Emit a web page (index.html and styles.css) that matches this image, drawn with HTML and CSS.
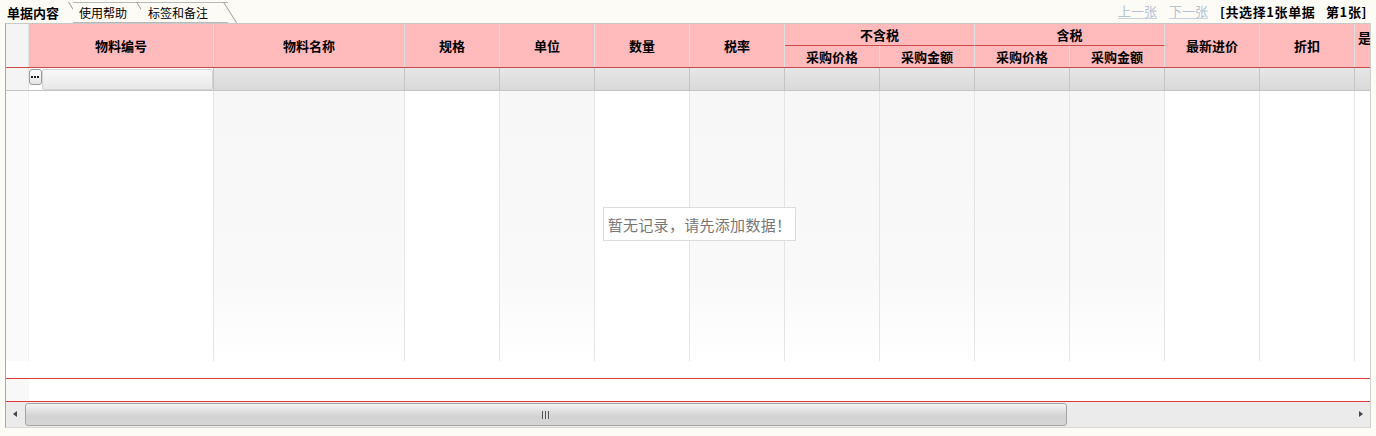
FILE: index.html
```html
<!DOCTYPE html>
<html lang="zh">
<head>
<meta charset="utf-8">
<link rel="stylesheet" href="styles.css">
</head>
<body>
<div class="tabbar">
  <div class="tabs">
    <div class="tab active">单据内容</div>
    <div class="tab">使用帮助</div>
    <div class="tab">标签和备注</div>
  </div>
  <div class="nav">
    <span class="link">上一张</span>
    <span class="link">下一张</span>
    <span class="info">[共选择1张单据&nbsp;&nbsp;&nbsp;第1张]</span>
  </div>
</div>
<div class="grid">
  <div class="head">
    <div class="h rn span2"></div>
    <div class="h span2">物料编号</div>
    <div class="h span2">物料名称</div>
    <div class="h span2">规格</div>
    <div class="h span2">单位</div>
    <div class="h span2">数量</div>
    <div class="h span2">税率</div>
    <div class="h group g1">不含税</div>
    <div class="h group g2">含税</div>
    <div class="h span2 c11">最新进价</div>
    <div class="h span2 c12">折扣</div>
    <div class="h span2 c13 top">是</div>
    <div class="h sub c7">采购价格</div>
    <div class="h sub c8">采购金额</div>
    <div class="h sub c9">采购价格</div>
    <div class="h sub c10">采购金额</div>
  </div>
  <div class="filter">
    <div class="f rn"></div>
    <div class="f first"><span class="dots"><svg width="9" height="3" viewBox="0 0 9 3"><rect x="0" y="0" width="2" height="2" fill="#222"/><rect x="3" y="0" width="2" height="2" fill="#222"/><rect x="6" y="0" width="2" height="2" fill="#222"/></svg></span><span class="inp"></span></div>
    <div class="f"></div><div class="f"></div><div class="f"></div><div class="f"></div>
    <div class="f"></div><div class="f"></div><div class="f"></div><div class="f"></div>
    <div class="f"></div><div class="f"></div><div class="f"></div><div class="f last"></div>
  </div>
  <div class="body">
    <div class="cols">
      <div class="c rn"></div>
      <div class="c"></div><div class="c shade"></div><div class="c"></div><div class="c shade"></div>
      <div class="c"></div><div class="c shade"></div><div class="c shade"></div><div class="c shade"></div>
      <div class="c shade"></div><div class="c shade"></div><div class="c"></div><div class="c"></div>
      <div class="c last"></div>
    </div>
    <div class="empty">暂无记录，请先添加数据！</div>
  </div>
  <div class="foot">
    <div class="frn"></div>
  </div>
  <div class="scroll">
    <div class="arrow left"></div>
    <div class="track">
      <div class="thumb"><span class="grip"></span></div>
    </div>
    <div class="arrow right"></div>
  </div>
</div>
</body>
</html>
```

FILE: styles.css
```css
* { box-sizing: border-box; }
html, body { margin: 0; padding: 0; }
body {
  background: #fcfbf6;
  font-family: "Noto Sans CJK SC", "Liberation Sans", sans-serif;
  font-size: 12px;
  color: #000;
  width: 1376px;
  height: 436px;
  overflow: hidden;
}

.tabbar {
  height: 23px;
  display: flex;
  justify-content: space-between;
  align-items: flex-end;
  padding-left: 5px;
  padding-right: 9px;
}
.tabs { display: flex; height: 21px; align-items: stretch; }
.tab {
  position: relative;
  display: flex;
  align-items: center;
  padding: 0 14px 0 5px;
  font-size: 12px;
  line-height: 1;
  border-top: 1px solid #b8b8b8;
  border-bottom: 1px solid #b8b8b8;
  background: #fcfbf6;
}
.tab::after {
  content: "";
  position: absolute;
  right: 4px;
  top: -1px;
  width: 1px;
  height: 21px;
  background: #9a9a9a;
  transform: skewX(32deg);
  transform-origin: top;
}
.tab.active {
  font-weight: bold;
  font-size: 13px;
  border-top-color: transparent;
  border-bottom-color: transparent;
  padding-left: 2px;
  padding-right: 14px;
}
.tab:nth-child(2) { padding-left: 6px; padding-right: 14px; }
.tab:nth-child(3) { padding-left: 7px; padding-right: 20px; }

.nav {
  display: flex;
  align-items: center;
  height: 23px;
  gap: 12px;
  font-size: 13px;
}
.link {
  color: #b4c2d4;
  border-bottom: 1px solid #c8d2de;
  line-height: 14px;
}
.info { font-weight: bold; letter-spacing: 0.6px; }

.grid {
  margin-left: 5px;
  width: 1366px;
  border-left: 1px solid #a8a8a8;
  border-top: 1px solid #c8c8c8;
  border-right: 1px solid #d0d0d0;
  border-bottom: 1px solid #d8d8d8;
  background: #fff;
  display: flex;
  flex-direction: column;
}

.head, .filter, .cols {
  display: grid;
  grid-template-columns: 23px 185px 191px repeat(10, 95px) 1fr;
}
.head {
  grid-template-rows: 22px 21px;
  height: 44px;
  background: #ffbbbb;
  border-bottom: 1px solid #cc4a4a;
}
.h {
  display: flex;
  align-items: center;
  justify-content: center;
  font-weight: bold;
  font-size: 13px;
  border-right: 1px solid #dedede;
  white-space: nowrap;
  overflow: hidden;
}
.h.rn { background: #f4f4f4; border-right: 1px solid #e2e2e2; grid-column: 1; }
.span2 { grid-row: 1 / span 2; }
.group { grid-row: 1; border-bottom: 1px solid #cc4a4a; }
.g1 { grid-column: 8 / span 2; }
.g2 { grid-column: 10 / span 2; }
.c11 { grid-column: 12; }
.c12 { grid-column: 13; }
.c13 { grid-column: 14; border-right: none; }
.top { align-items: flex-start; padding-top: 4px; justify-content: flex-start; padding-left: 3px; }
.sub { grid-row: 2; }
.c7 { grid-column: 8; }
.c8 { grid-column: 9; }
.c9 { grid-column: 10; }
.c10 { grid-column: 11; }

.filter {
  height: 23px;
  background: linear-gradient(#e6e6e6, #d9d9d9);
  border-bottom: 1px solid #c4c4c4;
}
.f { border-right: 1px solid #c4c4c4; }
.f.rn { background: #f4f4f4; border-right: 1px solid #e6e6e6; }
.f.last { border-right: none; }
.f.first {
  background: #fff;
  display: flex;
  align-items: flex-start;
  padding-top: 1px;
}
.dots {
  width: 13px;
  height: 16px;
  border: 1px solid #9a9a9a;
  border-radius: 3px;
  background: linear-gradient(#ffffff, #e4e4e4);
  display: flex;
  align-items: center;
  justify-content: center;
}
.inp {
  flex: 1;
  height: 21px;
  border: 1px solid #d4d4d4;
  border-radius: 2px;
  background: linear-gradient(#f8f8f8, #e8e8e8);
}

.body {
  position: relative;
  height: 288px;
  border-bottom: 1px solid #e03a3a;
}
.cols { height: 270px; }
.c { border-right: 1px solid #e4e4e4; background: #fff; }
.c.shade { background: linear-gradient(#f7f7f7 0%, #f9f9f9 70%, #ffffff 100%); }
.c.rn { background: #fafafa; border-right: 1px solid #f0f0f0; }
.c.last { border-right: none; }
.empty {
  position: absolute;
  left: 597px;
  top: 116px;
  width: 193px;
  height: 34px;
  border: 1px solid #dcdcdc;
  background: #fff;
  color: #777;
  font-size: 15px;
  display: flex;
  align-items: center;
  justify-content: center;
  letter-spacing: 0.3px;
}

.foot {
  height: 23px;
  border-bottom: 1px solid #e03a3a;
  display: flex;
}
.frn { width: 23px; background: #f8f8f8; }

.scroll {
  height: 25px;
  display: flex;
  align-items: stretch;
  background: #ebebeb;
}
.arrow { width: 19px; position: relative; }
.arrow.left::before {
  content: "";
  position: absolute;
  left: 7px; top: 9px;
  border-right: 4px solid #444;
  border-top: 3px solid transparent;
  border-bottom: 3px solid transparent;
}
.arrow.right { width: 15px; }
.arrow.right::before {
  content: "";
  position: absolute;
  left: 4px; top: 9px;
  border-left: 4px solid #444;
  border-top: 3px solid transparent;
  border-bottom: 3px solid transparent;
}
.track { flex: 1; display: flex; padding: 1px 0; }
.thumb {
  width: 1042px;
  height: 23px;
  border: 1px solid #a4a4a4;
  border-radius: 3px;
  background: linear-gradient(#f4f4f4 0%, #e2e2e2 30%, #d2d2d2 60%, #d6d6d6 100%);
  display: flex;
  align-items: center;
  justify-content: center;
}
.grip {
  width: 8px;
  height: 8px;
  background: repeating-linear-gradient(90deg, #555 0 1px, #ddd 1px 3px);
}
```
